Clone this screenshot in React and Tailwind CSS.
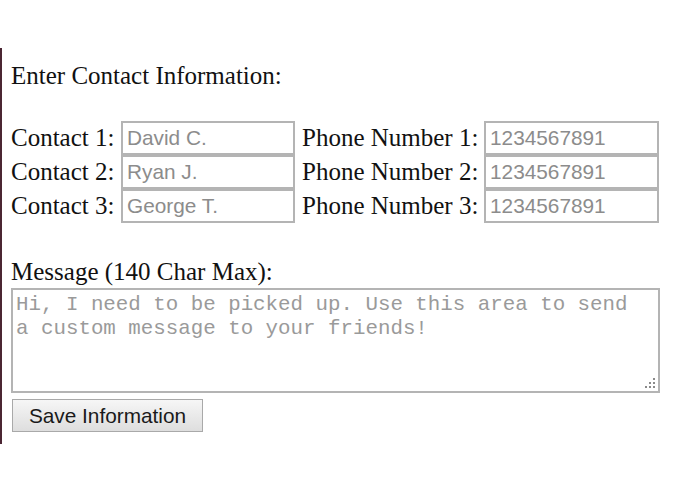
import React from 'react';

const rows = [
  { n: 1, name: 'David C.' },
  { n: 2, name: 'Ryan J.' },
  { n: 3, name: 'George T.' },
];

const inputCls =
  "h-[34px] border-2 border-[#b4b4b4] bg-white px-[4px] text-[20.8px] font-['Liberation_Sans',Arial,sans-serif] text-[#444] placeholder:text-[#8c8c8c] outline-none";

export default function App() {
  return (
    <div className="w-[695px] h-[494px] bg-white pt-[48px]">
      <div className="h-[396px] border-l-2 border-[#4b2633] pl-[9px] font-['Liberation_Serif','Times_New_Roman',serif] text-[25px] text-[#111] leading-[24px]">
        <div className="pt-[16px]">Enter Contact Information:</div>

        <div className="mt-[33px] flex flex-col">
          {rows.map((r) => (
            <div key={r.n} className="flex items-center">
              <label className="w-[110px] whitespace-nowrap">Contact {r.n}:</label>
              <input className={`${inputCls} w-[174px]`} placeholder={r.name} />
              <label className="ml-[7px] w-[182px] whitespace-nowrap">Phone Number {r.n}:</label>
              <input className={`${inputCls} w-[175px]`} placeholder="1234567891" />
            </div>
          ))}
        </div>

        <div className="mt-[37px]">Message (140 Char Max):</div>
        <div className="relative mt-[4px] w-[649px]">
          <textarea
            className="block w-[649px] h-[105px] resize-none border-2 border-[#b4b4b4] pl-[3px] pr-[20px] pt-[3px] pb-[1px] font-['Liberation_Mono','Courier_New',monospace] text-[20.8px] leading-[24px] placeholder:text-[#9a9a9a] outline-none"
            placeholder="Hi, I need to be picked up. Use this area to send a custom message to your friends!"
          />
          {/* resize grip, old-Chrome dotted style */}
          <svg className="absolute right-[4px] bottom-[4px]" width="11" height="11" viewBox="0 0 11 11">
            <g fill="#8a8a8a">
              <rect x="8" y="0" width="2" height="2" />
              <rect x="4" y="4" width="2" height="2" />
              <rect x="8" y="4" width="2" height="2" />
              <rect x="0" y="8" width="2" height="2" />
              <rect x="4" y="8" width="2" height="2" />
              <rect x="8" y="8" width="2" height="2" />
            </g>
          </svg>
        </div>
        <button className="mt-[6px] ml-[1px] w-[191px] h-[33px] border border-[#a9a9a9] bg-gradient-to-b from-[#f6f6f6] to-[#dedede] pt-[1px] font-['Liberation_Sans',Arial,sans-serif] text-[20.8px] text-[#1a1a1a] leading-none">
          Save Information
        </button>
      </div>
    </div>
  );
}
